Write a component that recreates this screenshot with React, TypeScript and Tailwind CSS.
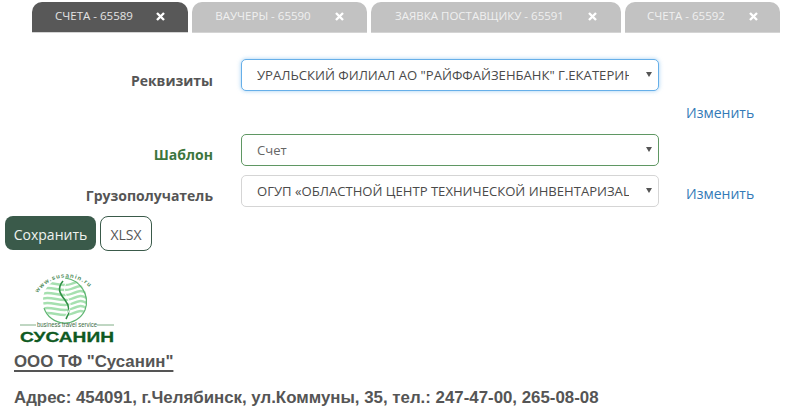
const tabs = [
  { label: 'СЧЕТА - 65589', width: 'w-[156px]', gap: 'gap-[23px]', active: true },
  { label: 'ВАУЧЕРЫ - 65590', width: 'w-[175px]', gap: 'gap-[24px]', active: false },
  { label: 'ЗАЯВКА ПОСТАВЩИКУ - 65591', width: 'w-[250px]', gap: 'gap-[24px]', active: false },
  { label: 'СЧЕТА - 65592', width: 'w-[155px]', gap: 'gap-[24px]', active: false },
]

function CloseIcon() {
  return (
    <svg width="9" height="9" viewBox="0 0 9 9" className="shrink-0" aria-hidden="true">
      <path d="M1 1 L8 8 M8 1 L1 8" stroke="#fff" strokeWidth="2.4" />
    </svg>
  )
}

function Select({ value, border, muted }: { value: string; border: string; muted?: boolean }) {
  return (
    <div className={`relative w-[418px] h-[32px] shrink-0 rounded-[5px] bg-white pl-[15px] pr-[29px] pt-[1px] flex items-center ${border}`}>
      <span className={`block overflow-hidden whitespace-nowrap text-[13.1px] ${muted ? 'text-[#666]' : 'text-[#4a4a4a]'}`}>{value}</span>
      <svg width="6" height="5" viewBox="0 0 6 5" className="absolute right-[6px] top-[12px]" aria-hidden="true">
        <path d="M0 0 H6 L3 5 Z" fill="#555" />
      </svg>
    </div>
  )
}

function Logo() {
  return (
    <svg width="96" height="72" viewBox="0 0 96 72" className="block" aria-hidden="true">
      <defs>
        <path id="ring" d="M19 21 A 33 33 0 0 1 75 21" />
        <clipPath id="disc">
          <circle cx="46" cy="28" r="22" />
        </clipPath>
      </defs>
      <text fontFamily="'Liberation Sans', sans-serif" fontSize="6" fontWeight="700" fill="#4c8a58" letterSpacing="1">
        <textPath href="#ring" startOffset="0">www.susanin.ru</textPath>
      </text>
      <g clipPath="url(#disc)" fill="none" stroke="#a6e0b0" strokeWidth="2.4">
        <path d="M22 12 C32 8 42 16 52 12 S62 8 70 12" />
        <path d="M22 17 C32 13 42 21 52 17 S62 13 70 17" />
        <path d="M22 22 C32 18 42 26 52 22 S62 18 70 22" />
        <path d="M22 27 C32 23 42 31 52 27 S62 23 70 27" />
        <path d="M22 32 C32 28 42 36 52 32 S62 28 70 32" />
        <path d="M22 37 C32 33 42 41 52 37 S62 33 70 37" />
        <path d="M22 42 C32 38 42 46 52 42 S62 38 70 42" />
      </g>
      <path d="M25 36 A 22 22 0 0 0 66 38 A 24 24 0 0 0 46 6" fill="none" stroke="#5fb572" strokeWidth="1.2" />
      <path d="M44 9 C37 17 42 23 46 28 C50 33 52 39 47 47" fill="none" stroke="#2f8f45" strokeWidth="1.6" />
      <path d="M47 11 C44 17 46 22 49 27 C53 33 51 40 44 47" fill="none" stroke="#ffffff" strokeWidth="1" />
      <path d="M1 53 H17 M78 53 H95" stroke="#5f9a68" strokeWidth="0.8" />
      <text x="48" y="55" textAnchor="middle" fontFamily="'Liberation Sans', sans-serif" fontSize="6.5" fill="#3d6b45" textLength="60" lengthAdjust="spacingAndGlyphs">business travel service</text>
      <text x="48" y="70" textAnchor="middle" fontFamily="'Liberation Sans', sans-serif" fontSize="15.5" fontWeight="700" fill="#0f5a22" stroke="#0f5a22" strokeWidth="0.3" textLength="94" lengthAdjust="spacingAndGlyphs">СУСАНИН</text>
    </svg>
  )
}

export default function App() {
  return (
    <div className="w-[800px] h-[416px] overflow-hidden bg-white font-['Open_Sans',sans-serif] text-[#555]">
      <div className="flex gap-[4px] pl-[32px] pt-[2px] h-[33px]">
        {tabs.map(tab => (
          <div
            key={tab.label}
            className={`${tab.width} ${tab.gap} flex items-center justify-center rounded-t-[10px] text-[11.5px] pb-[2px] border-b border-b-[#d4d4d4] ${
              tab.active ? 'bg-[#585858] text-[#e4e4e4]' : 'bg-[#c2c2c2] text-[#f0f0f0]'
            }`}
          >
            <span>{tab.label}</span>
            <CloseIcon />
          </div>
        ))}
      </div>

      <div className="mt-[26px] flex items-center">
        <label className="w-[213px] pt-[10px] text-right text-[14px] font-bold text-[#555]">Реквизиты</label>
        <div className="ml-[28px]">
          <Select
            value={'УРАЛЬСКИЙ ФИЛИАЛ АО "РАЙФФАЙЗЕНБАНК" Г.ЕКАТЕРИНБУРГ'}
            border="border border-[#66afe9] shadow-[0_0_4px_rgba(102,175,233,0.6)]"
          />
        </div>
      </div>

      <div className="mt-[12px] h-[19px] flex pl-[686px] text-[14px] leading-[19px] text-[#337ab7]">Изменить</div>

      <div className="mt-[12px] flex items-center">
        <label className="w-[213px] pt-[8px] text-right text-[14px] font-bold text-[#3c763d]">Шаблон</label>
        <div className="ml-[28px]">
          <Select value="Счет" border="border border-[#5f9763]" muted />
        </div>
      </div>

      <div className="mt-[9px] flex items-center">
        <label className="w-[213px] pt-[8px] text-right text-[14px] font-bold text-[#555]">Грузополучатель</label>
        <div className="ml-[28px]">
          <Select value="ОГУП «ОБЛАСТНОЙ ЦЕНТР ТЕХНИЧЕСКОЙ ИНВЕНТАРИЗАЦИИ»" border="border border-[#d5d5d5]" />
        </div>
        <span className="ml-[27px] pt-[4px] text-[14px] text-[#337ab7]">Изменить</span>
      </div>

      <div className="mt-[9px] flex gap-[4px] pl-[5px]">
        <button className="w-[91px] h-[34px] rounded-[8px] bg-[#3a5a4a] pt-[2px] text-[14px] text-[#eef2ef]">Сохранить</button>
        <button className="w-[52px] h-[35px] rounded-[8px] border border-[#3a5a4a] bg-white pt-[2px] text-[14px] text-[#555]">XLSX</button>
      </div>

      <div className="mt-[21px] pl-[19px]">
        <Logo />
      </div>

      <div className="mt-[8px] pl-[14px] font-['Liberation_Sans',sans-serif] font-bold text-[16.85px] text-[#555]">
        <div className="leading-[20px] underline decoration-2 underline-offset-[3px]">ООО ТФ "Сусанин"</div>
        <div className="mt-[16px] leading-[20px]">Адрес: 454091, г.Челябинск, ул.Коммуны, 35, тел.: 247-47-00, 265-08-08</div>
      </div>
    </div>
  )
}
